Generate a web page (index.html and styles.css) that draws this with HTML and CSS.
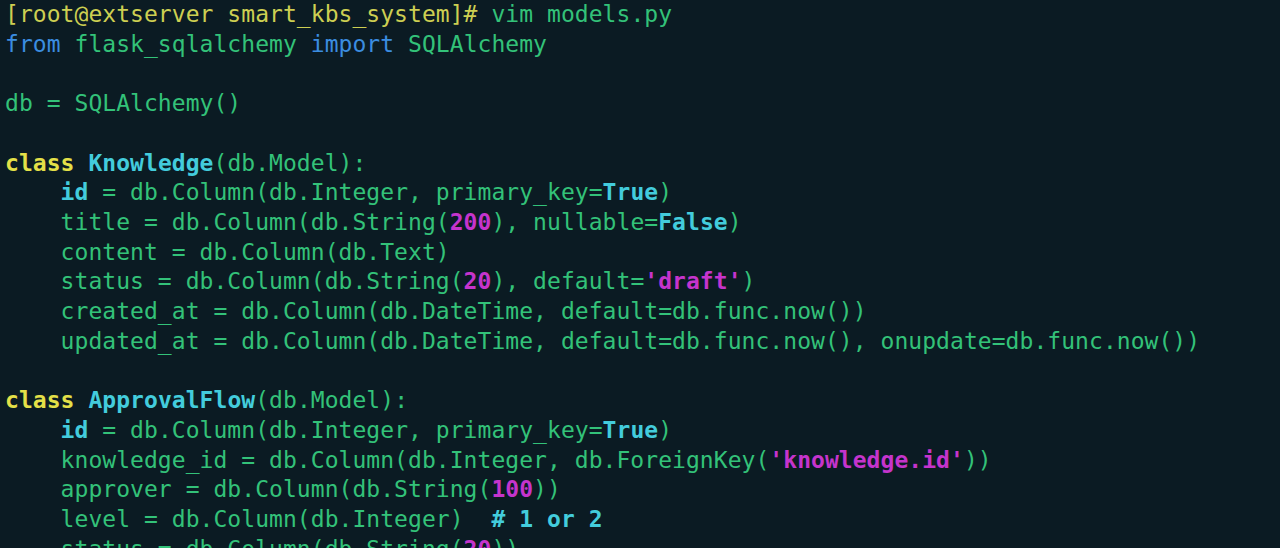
FILE: index.html
```html
<!DOCTYPE html>
<html>
<head>
<meta charset="utf-8">
<link rel="stylesheet" href="styles.css">
</head>
<body>
<pre class="term"><span class="pr">[root@extserver smart_kbs_system]#</span> vim models.py
<span class="kw">from</span> flask_sqlalchemy <span class="kw">import</span> SQLAlchemy

db = SQLAlchemy()

<span class="cl">class</span> <span class="nm">Knowledge</span>(db.Model):
    <span class="nm">id</span> = db.Column(db.Integer, primary_key=<span class="nm">True</span>)
    title = db.Column(db.String(<span class="num">200</span>), nullable=<span class="nm">False</span>)
    content = db.Column(db.Text)
    status = db.Column(db.String(<span class="num">20</span>), default=<span class="str">'draft'</span>)
    created_at = db.Column(db.DateTime, default=db.func.now())
    updated_at = db.Column(db.DateTime, default=db.func.now(), onupdate=db.func.now())

<span class="cl">class</span> <span class="nm">ApprovalFlow</span>(db.Model):
    <span class="nm">id</span> = db.Column(db.Integer, primary_key=<span class="nm">True</span>)
    knowledge_id = db.Column(db.Integer, db.ForeignKey(<span class="str">'knowledge.id'</span>))
    approver = db.Column(db.String(<span class="num">100</span>))
    level = db.Column(db.Integer)  <span class="cm"># 1 or 2</span>
    status = db.Column(db.String(<span class="num">20</span>))
</pre>
</body>
</html>
```
FILE: styles.css
```css
html, body {
  margin: 0;
  padding: 0;
  background: #0b1b23;
  height: 100%;
  overflow: hidden;
}
.term {
  margin: 0;
  padding: 0 0 0 5px;
  font-family: "DejaVu Sans Mono", monospace;
  font-size: 23px;
  line-height: 29.7px;
  letter-spacing: 0.05px;
  color: #33c279;
  white-space: pre;
}
.pr { color: #cdcf52; }
.kw { color: #3b8de0; }
.cl { color: #e4e048; font-weight: bold; }
.nm { color: #43ccdc; font-weight: bold; }
.num { color: #c534cc; font-weight: bold; }
.str { color: #c534cc; font-weight: bold; }
.cm { color: #43ccdc; font-weight: bold; }
```
